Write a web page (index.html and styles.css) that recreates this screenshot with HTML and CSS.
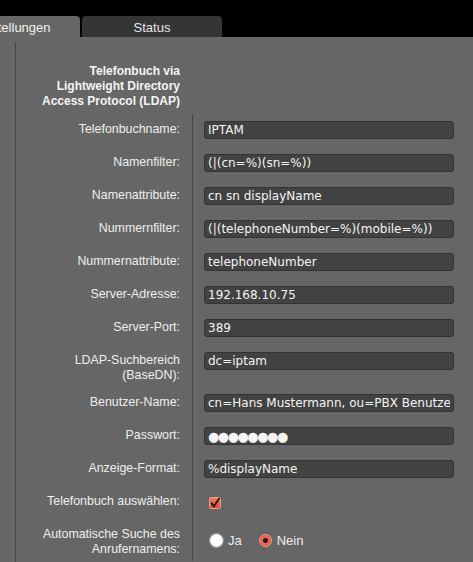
FILE: index.html
```html
<!DOCTYPE html>
<html lang="de">
<head>
  <meta charset="UTF-8" />
  <meta name="viewport" content="width=device-width, initial-scale=1.0"/>
  <title>LDAP Telefonbuch</title>
  <link rel="stylesheet" href="styles.css">
</head>
<body>
  <nav class="tabs">
    <div class="tab active">Einstellungen</div>
    <div class="tab">Status</div>
  </nav>

  <main class="panel">
    <section class="section">
      <h2 class="section-title">Telefonbuch via<br>Lightweight Directory<br>Access Protocol (LDAP)</h2>

      <div class="rows">
        <label class="label">Telefonbuchname:</label>
        <div class="control"><input class="field" type="text" value="IPTAM"></div>

        <label class="label">Namenfilter:</label>
        <div class="control"><input class="field" type="text" value="(|(cn=%)(sn=%))"></div>

        <label class="label">Namenattribute:</label>
        <div class="control"><input class="field" type="text" value="cn sn displayName"></div>

        <label class="label">Nummernfilter:</label>
        <div class="control"><input class="field" type="text" value="(|(telephoneNumber=%)(mobile=%))"></div>

        <label class="label">Nummernattribute:</label>
        <div class="control"><input class="field" type="text" value="telephoneNumber"></div>

        <label class="label">Server-Adresse:</label>
        <div class="control"><input class="field" type="text" value="192.168.10.75"></div>

        <label class="label">Server-Port:</label>
        <div class="control"><input class="field" type="text" value="389"></div>

        <label class="label">LDAP-Suchbereich<br>(BaseDN):</label>
        <div class="control"><input class="field" type="text" value="dc=iptam"></div>

        <label class="label">Benutzer-Name:</label>
        <div class="control"><input class="field" type="text" value="cn=Hans Mustermann, ou=PBX Benutzer, dc=iptam"></div>

        <label class="label">Passwort:</label>
        <div class="control"><input class="field secret" type="text" value="●●●●●●●●" readonly></div>

        <label class="label">Anzeige-Format:</label>
        <div class="control"><input class="field" type="text" value="%displayName"></div>

        <label class="label">Telefonbuch auswählen:</label>
        <div class="control">
          <span class="check">
            <svg width="12" height="12" viewBox="0 0 12 12"><path d="M2.6 6.2 L4.8 9.4 L10.2 1.6" fill="none" stroke="#1c1c1c" stroke-width="1.8" stroke-linecap="round" stroke-linejoin="round"/></svg>
          </span>
        </div>

        <label class="label">Automatische Suche des<br>Anrufernamens:</label>
        <div class="control">
          <span class="radio"></span><span class="radio-text">Ja</span>
          <span class="radio on"></span><span class="radio-text">Nein</span>
        </div>
      </div>
    </section>
  </main>
</body>
</html>
```

FILE: styles.css
```css
* {
  box-sizing: border-box;
}

html, body {
  height: 100%;
}

body {
  margin: 0;
  background: #000;
  color: #eee;
  font-family: "Liberation Sans", Arial, sans-serif;
  font-size: 12px;
  overflow: hidden;
}

/* tab strip */
.tabs {
  display: flex;
  align-items: flex-end;
  height: 37px;
}

.tab {
  width: 140px;
  height: 21px;
  margin-left: 2px;
  line-height: 23px;
  text-align: center;
  font-size: 13px;
  color: #e6e6e6;
  background: #353535;
  border-radius: 4px 4px 0 0;
}

.tab.active {
  width: 137px;
  margin-left: -57px;
  background: #666;
  color: #f2f2f2;
}

.panel {
  background: #666;
  padding-top: 5px;
  min-height: calc(100% - 37px);
}

.section {
  margin-left: 15px;
  border-left: 1px solid #454545;
  min-height: 520px;
}

.section-title {
  width: 176px;
  margin: 0;
  padding: 22px 12px 5px 0;
  text-align: right;
  font-size: 12px;
  line-height: 15px;
  font-weight: bold;
  color: #f4f4f4;
}

/* form rows: label column + control column */
.rows {
  display: grid;
  grid-template-columns: 176px 1fr;
}

.label {
  padding: 8px 12px 4px 0;
  text-align: right;
  font-size: 12.4px;
  line-height: 15px;
  color: #eee;
}

.control {
  display: flex;
  align-items: center;
  min-height: 33px;
  padding: 6px 0 6px 11px;
  border-left: 1px solid #454545;
}

.control:has(.field) {
  align-items: flex-start;
}

.field {
  width: 250px;
  height: 18px;
  margin: 1px 0 2px;
  padding: 0 3px;
  border: 1px solid #333;
  border-radius: 3px;
  background: #424242;
  color: #f4f4f4;
  font-family: "DejaVu Sans", sans-serif;
  font-size: 12px;
  outline: none;
}

.field.secret {
  font-size: 13px;
  letter-spacing: -1.5px;
}

.check {
  display: flex;
  width: 12px;
  height: 12px;
  margin-left: 5px;
  border: 1px solid #f39a88;
  border-radius: 2px;
  background: linear-gradient(#f47a66, #dc4a36);
}

.check svg {
  margin: -1px 0 0 -1px;
  overflow: visible;
}

.radio {
  width: 13px;
  height: 13px;
  margin-left: 6px;
  border-radius: 50%;
  background: radial-gradient(circle at 45% 40%, #fff 55%, #ddd 100%);
  box-shadow: 0 0 1px 1px rgba(255, 255, 255, 0.35);
}

.radio.on {
  margin-left: 17px;
  background: radial-gradient(circle, #222 0 2.2px, #f06a55 2.8px, #d84a38 100%);
  border: 1px solid #f5a090;
  box-shadow: none;
}

.radio-text {
  margin-left: 5px;
  font-size: 13px;
  color: #eee;
}
```
